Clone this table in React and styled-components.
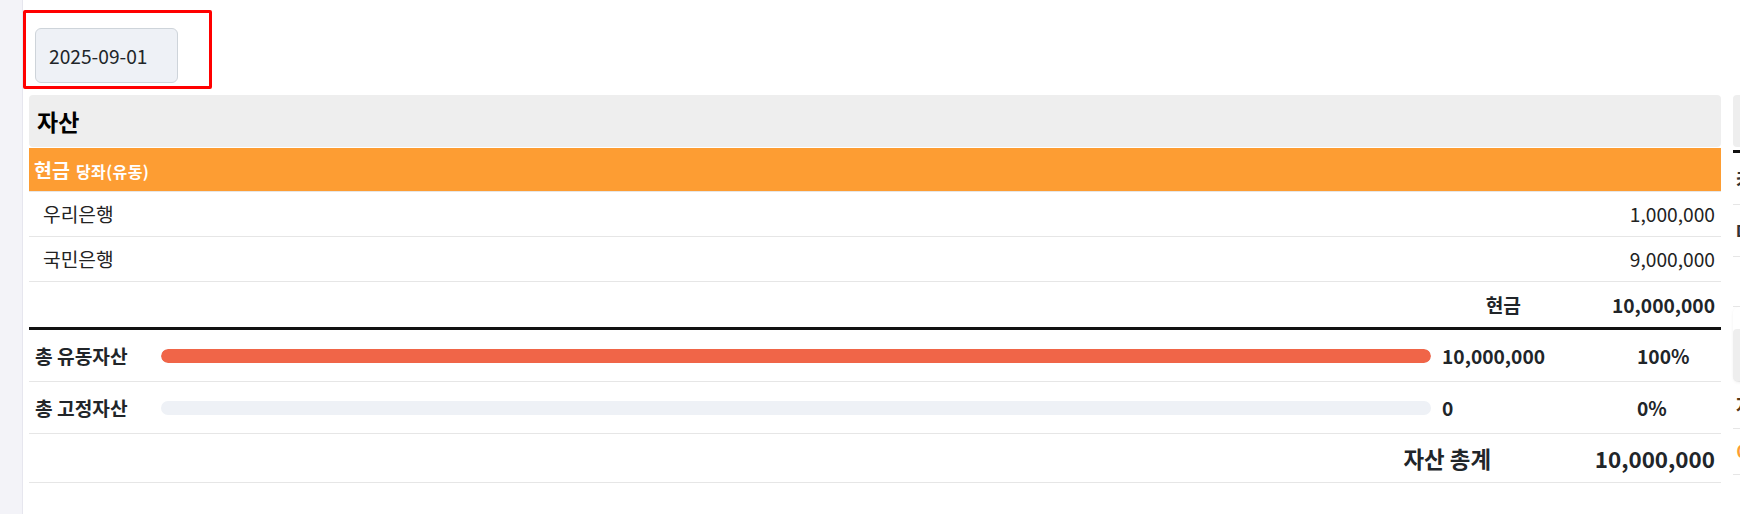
import React from 'react'
import styled, { createGlobalStyle } from 'styled-components'

const GlobalStyle = createGlobalStyle`
  body {
    margin: 0;
    font-family: "Noto Sans CJK KR", "Noto Sans", sans-serif;
    color: #212529;
    background: #fff;
    overflow: hidden;
  }
`

const currentItems = [
  { name: '우리은행', amount: '1,000,000' },
  { name: '국민은행', amount: '9,000,000' },
]

const summary = [
  { label: '총 유동자산', amount: '10,000,000', percent: 100 },
  { label: '총 고정자산', amount: '0', percent: 0 },
]

const App = () => {
  return (
    <Layout>
      <GlobalStyle />
      <Sidebar />
      <Main>
        <Highlight>
          <DateInput type="text" defaultValue="2025-09-01" readOnly />
        </Highlight>
        <Panels>
          <Panel>
            <PanelHeader>자산</PanelHeader>
            <GroupBar>
              현금 <small>당좌(유동)</small>
            </GroupBar>
            {currentItems.map((item) => (
              <ItemRow key={item.name}>
                <span>{item.name}</span>
                <span>{item.amount}</span>
              </ItemRow>
            ))}
            <SubtotalRow>
              <span>현금</span>
              <Amount>10,000,000</Amount>
            </SubtotalRow>
            {summary.map((row) => (
              <MetricRow key={row.label}>
                <MetricLabel>{row.label}</MetricLabel>
                <Track>
                  <Fill style={{ width: `${row.percent}%` }} />
                </Track>
                <MetricValue>{row.amount}</MetricValue>
                <MetricPercent>{row.percent}%</MetricPercent>
              </MetricRow>
            ))}
            <TotalRow>
              <span>자산 총계</span>
              <TotalAmount>10,000,000</TotalAmount>
            </TotalRow>
          </Panel>

          <SidePanel>
            <PanelHeader>부채</PanelHeader>
            <SideRule />
            <SideRow $tone="#333">카드</SideRow>
            <SideRow $tone="#333">대출</SideRow>
            <SideGap />
            <SideBox>
              <PanelHeader>자본</PanelHeader>
            </SideBox>
            <SideRow $tone="#5a3a1a" $h={46}>자본금</SideRow>
            <SideRow $tone="#fd9d33" $h={45}>이익</SideRow>
          </SidePanel>
        </Panels>
      </Main>
    </Layout>
  )
}

export default App

const Layout = styled.div`
  display: flex;
  width: 100vw;
  height: 100vh;
  overflow: hidden;
`

const Sidebar = styled.aside`
  flex: 0 0 22px;
  background: #f3f3f8;
  border-right: 1px solid #e6e6ee;
`

const Main = styled.main`
  flex: 1;
  min-width: 0;
  overflow: hidden;
  padding-top: 10px;
`

const Highlight = styled.div`
  width: 189px;
  height: 79px;
  box-sizing: border-box;
  border: 3px solid #ff0000;
  border-radius: 2px;
  padding: 15px 0 0 9px;
`

const DateInput = styled.input`
  width: 143px;
  height: 55px;
  box-sizing: border-box;
  padding: 0 13px;
  background: #eef1f6;
  border: 1px solid #ced4da;
  border-radius: 6px;
  font-family: "Noto Sans CJK KR", "Noto Sans", sans-serif;
  font-size: 19.2px;
  color: #212529;
  outline: none;
`

const Panels = styled.div`
  display: flex;
  gap: 12px;
  margin-top: 6px;
  padding-left: 6px;
`

const Panel = styled.section`
  flex: 0 0 1692px;
  display: flex;
  flex-direction: column;
`

const PanelHeader = styled.div`
  height: 52px;
  display: flex;
  align-items: center;
  padding-left: 8px;
  background: #eeeeee;
  border-radius: 4px;
  font-size: 23px;
  font-weight: 700;
  color: #000;
`

const GroupBar = styled.div`
  margin-top: 1px;
  height: 43px;
  display: flex;
  align-items: center;
  gap: 6px;
  padding-left: 5px;
  background: #fd9d33;
  color: #fff;
  font-size: 19.5px;
  font-weight: 700;
  border-bottom: 1px solid #e6e6e6;

  small {
    font-size: 16px;
    font-weight: 700;
    letter-spacing: 0.4px;
    padding-top: 2px;
  }
`

const ItemRow = styled.div`
  height: 44px;
  display: flex;
  align-items: center;
  justify-content: space-between;
  padding: 0 6px 0 14px;
  border-bottom: 1px solid #e6e6e6;
  font-size: 19.2px;
  color: #222;
`

const SubtotalRow = styled.div`
  height: 45px;
  display: flex;
  align-items: center;
  justify-content: flex-end;
  padding-right: 6px;
  border-bottom: 3px solid #111;
  font-size: 19.2px;
  font-weight: 700;
`

const Amount = styled.span`
  width: 194px;
  text-align: right;
`

const MetricRow = styled.div`
  height: 51px;
  display: flex;
  align-items: center;
  padding: 0 6px;
  border-bottom: 1px solid #e6e6e6;
  font-size: 19.2px;
  font-weight: 700;
`

const MetricLabel = styled.span`
  flex: 0 0 126px;
`

const Track = styled.div`
  flex: 1;
  height: 14px;
  border-radius: 7px;
  background: #eef1f6;
  overflow: hidden;
`

const Fill = styled.div`
  height: 100%;
  border-radius: 7px;
  background: #f06548;
`

const MetricValue = styled.span`
  flex: 0 0 195px;
  padding-left: 11px;
`

const MetricPercent = styled.span`
  flex: 0 0 78px;
`

const TotalRow = styled.div`
  height: 48px;
  display: flex;
  align-items: center;
  justify-content: flex-end;
  padding-right: 6px;
  border-bottom: 1px solid #e6e6e6;
  font-size: 22.4px;
  font-weight: 700;
`

const TotalAmount = styled.span`
  width: 224px;
  text-align: right;
`

const SidePanel = styled.section`
  flex: 0 0 600px;
  display: flex;
  flex-direction: column;
`

const SideRule = styled.div`
  margin-top: 3px;
  height: 3px;
  background: #111;
`

const SideRow = styled.div`
  height: ${(props) => props.$h || 51}px;
  display: flex;
  align-items: center;
  padding-left: 3px;
  border-bottom: 1px solid #e6e6e6;
  font-size: 19.2px;
  font-weight: 700;
  color: ${(props) => props.$tone};
`

const SideGap = styled.div`
  height: 49px;
  border-bottom: 1px solid #e6e6e6;
`

const SideBox = styled.div`
  padding-top: 22px;
  border-radius: 6px;
  background: #fff;
  box-shadow: 0 1px 3px rgba(0, 0, 0, 0.06);
  border-bottom: 1px solid #e6e6e6;
`
